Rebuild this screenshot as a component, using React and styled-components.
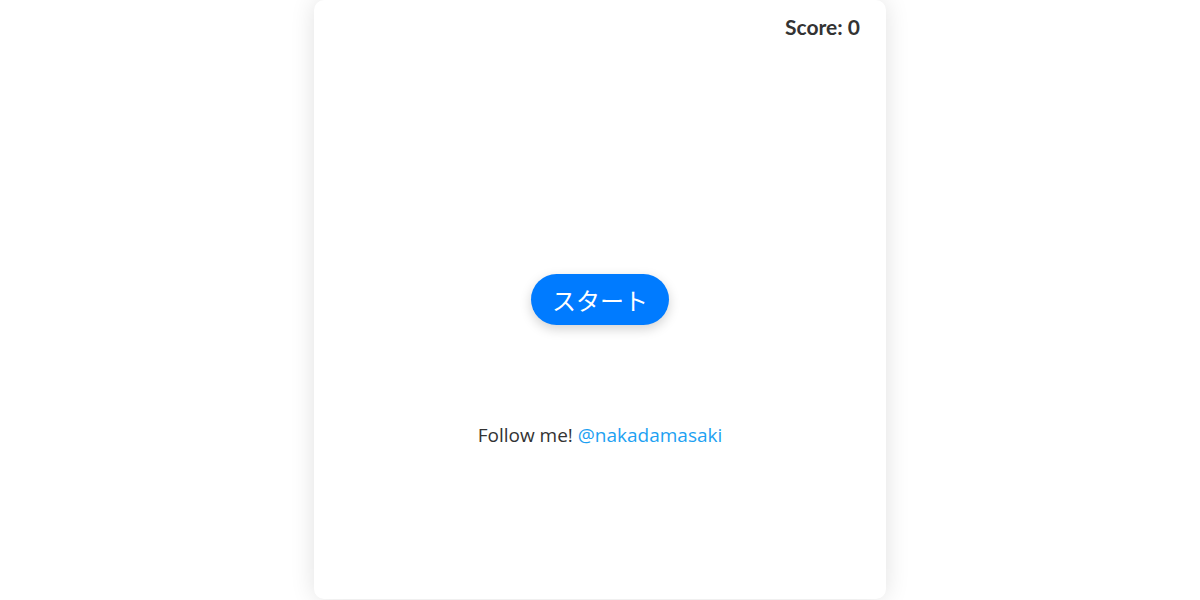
import React from "react";
import styled, { createGlobalStyle } from "styled-components";

const Global = createGlobalStyle`
  html, body { margin: 0; padding: 0; background: #ffffff; }
  body { font-family: "Open Sans", "Noto Sans CJK JP", sans-serif; color: #333333; }
`;

const Page = styled.div`
  width: 1200px;
  height: 600px;
  display: flex;
  justify-content: center;
  overflow: hidden;
`;

const Card = styled.div`
  position: relative;
  width: 572px;
  height: 599px;
  background: #ffffff;
  border-radius: 10px;
  box-shadow: 0 0 24px rgba(0, 0, 0, 0.12);
  display: grid;
  grid-template-rows: 1fr auto 1fr;
  justify-items: center;
`;

const Score = styled.div`
  position: absolute;
  top: 14px;
  right: 26px;
  font-family: "Lato", sans-serif;
  font-weight: 700;
  font-size: 21px;
  color: #333333;
`;

const StartButton = styled.button`
  grid-row: 2;
  height: 51px;
  padding: 0 21px;
  border: none;
  border-radius: 26px;
  background: #007bff;
  color: #ffffff;
  font-family: "Noto Sans CJK JP", sans-serif;
  font-size: 24px;
  line-height: 51px;
  box-shadow: 0 4px 12px rgba(0, 0, 0, 0.18);
  cursor: pointer;
`;

const Follow = styled.p`
  grid-row: 3;
  align-self: start;
  margin: 97px 0 0;
  font-family: "Open Sans", sans-serif;
  font-size: 19px;
  color: #333333;
`;

const Link = styled.a`
  color: #1da1f2;
  text-decoration: none;
`;

export default function App() {
  return (
    <>
      <Global />
      <Page>
        <Card>
          <Score>Score: 0</Score>
          <StartButton>スタート</StartButton>
          <Follow>
            Follow me! <Link href="#">@nakadamasaki</Link>
          </Follow>
        </Card>
      </Page>
    </>
  );
}
